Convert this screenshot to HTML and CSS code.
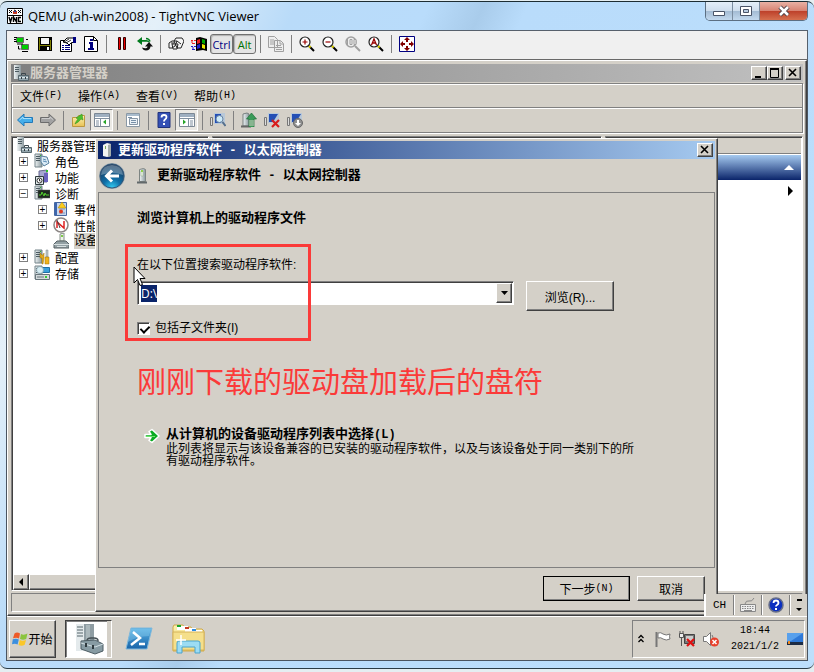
FILE: index.html
```html
<!DOCTYPE html>
<html lang="zh-CN">

<head>
    <meta charset="UTF-8">
    <meta name="viewport" content="width=device-width, initial-scale=1.0">
    <title>QEMU (ah-win2008) - TightVNC Viewer</title>
    <link rel="stylesheet" href="styles.css">
</head>

<body>
    <!-- shared icons -->
    <svg class="sprite" aria-hidden="true">
        <defs>
            <linearGradient id="steel" x1="0" x2="1">
                <stop offset="0" stop-color="#eef3f4" />
                <stop offset="1" stop-color="#8b999e" />
            </linearGradient>
            <linearGradient id="blue" x1="0" y1="0" x2="0" y2="1">
                <stop offset="0" stop-color="#5bb4e6" />
                <stop offset="1" stop-color="#1763a8" />
            </linearGradient>
            <linearGradient id="yellow" x1="0" y1="0" x2="0" y2="1">
                <stop offset="0" stop-color="#fdf3b4" />
                <stop offset="1" stop-color="#e8c254" />
            </linearGradient>
            <radialGradient id="orb" cx="50%" cy="100%" r="95%">
                <stop offset="0" stop-color="#35d0f5" />
                <stop offset="0.4" stop-color="#0f6fa8" />
                <stop offset="1" stop-color="#1b3556" />
            </radialGradient>
            <symbol id="tower" viewBox="0 0 16 16">
                <path d="M1 1h7v13H1z" fill="url(#steel)" stroke="#75848a" />
                <path d="M2 3.500h4M2 5.500h4M2 7.500h4" stroke="#4c5b62" />
                <path d="M6 2h1v1H6z" fill="#2bc02b" />
            </symbol>
            <symbol id="server" viewBox="0 0 16 16">
                <path d="M1 0h7v14H1z" fill="url(#steel)" />
                <path d="M2 2.500h4M2 4.500h4M2 6.500h4" stroke="#4c5b62" />
                <path d="M8.500 10V8.500h4V10" fill="none" stroke="#3a464c" />
                <path d="M5.500 10.500h10v5h-10z" fill="#93a5ad" stroke="#55646b" />
                <path d="M6 12.500h9" stroke="#dce6e9" />
                <path d="M8 12h1v2H8zM12 12h1v2h-1z" fill="#2f3a40" />
            </symbol>
            <symbol id="device" viewBox="0 0 10 16">
                <path d="M2.500 1.500l4-1 2 1v12h-6z" fill="url(#steel)" stroke="#7e8583" />
                <path d="M4 3h2v5H4z" fill="#eef9e8" stroke="#91a58b" stroke-width="0.500" />
                <path d="M4 2h2v2H4z" fill="#8fd14a" />
                <path d="M0 14.500h10" stroke="#62696b" stroke-width="2" />
            </symbol>
            <symbol id="flag4" viewBox="0 0 16 16">
                <path d="M2.500 2.500Q5 .5 8 2.500L7 7.500Q4.500 6 1 7.300z" fill="#ee5a27" />
                <path d="M9 3Q12 4.500 15.500 2.500L14.200 8Q11 9.500 8 8z" fill="#8bc43f" />
                <path d="M.8 8.300Q4 7 6.800 8.500L5.600 13.500Q3 12 0 13.200z" fill="#3c8fde" />
                <path d="M7.800 9Q10.500 10.500 14 8.900L12.700 13.800Q9.500 15.500 6.600 14z" fill="#fbc728" />
            </symbol>
            <symbol id="lens" viewBox="0 0 16 16">
                <path d="M10 10l5 5" stroke="#000" stroke-width="2" />
                <path d="M10 10l1.500 1.500" stroke="#e8dc00" stroke-width="2" />
                <circle cx="6" cy="6" r="5" fill="#fff" stroke="#222" stroke-width="1.200" />
            </symbol>
        </defs>
    </svg>

    <main class="viewer">
        <header class="viewer-title">
            <svg class="icon" viewBox="0 0 16 16">
                <path d="M.5.5h15v15H.5z" fill="#fff" stroke="#000" />
                <path d="M2 2l3 3M5 2L2 5M7 2l2 1M11 2l3 3M14 2l-3 3" stroke="#000" />
                <path d="M6 3h4v3H6z" fill="#c43b24" />
                <path d="M7 3h2v1H7z" fill="#2842b7" />
                <path d="M1 7.500h14" stroke="#000" />
                <path d="M2 9l1.500 5L5 9M6.500 14V9l3 5V9M14 9.500h-2.500v4H14" fill="none" stroke="#000" stroke-width="1.400" />
            </svg>
            <h1>QEMU (ah-win2008) - TightVNC Viewer</h1>
            <div class="caption-buttons">
                <button class="cap" aria-label="Minimize"><svg width="12" height="12" viewBox="0 0 12 12">
                        <path d="M.5 6.500h11v4H.5z" fill="#fff" stroke="#4a5467" />
                    </svg></button>
                <button class="cap" aria-label="Maximize"><svg width="12" height="12" viewBox="0 0 12 12">
                        <path d="M.5 1.500h11v9H.5z" fill="#fff" stroke="#4a5467" />
                        <path d="M3.500 4.500h5v3h-5z" fill="#b9cbe0" stroke="#4a5467" />
                    </svg></button>
                <button class="cap cap-close" aria-label="Close"><svg width="12" height="12" viewBox="0 0 12 12">
                        <path d="M2 2l8 8M10 2l-8 8" stroke="#4a4046" stroke-width="4.500" />
                        <path d="M2 2l8 8M10 2l-8 8" stroke="#fff" stroke-width="2.500" />
                    </svg></button>
            </div>
        </header>

        <nav class="viewer-toolbar">
            <button class="tool" aria-label="New connection"><svg class="icon" viewBox="0 0 16 16">
                    <path d="M2.500 1.500h7v5h-7zM7.500 8.500h7v5h-7z" fill="#0c0" stroke="#666" />
                    <path d="M0 1.500h3M0 3.500h2M0 5.500h3M3 8h6M8 15.500h6M12 3.500h2M4.500 10v3h2" stroke="#000" fill="none" />
                </svg></button>
            <button class="tool" aria-label="Save session"><svg class="icon" viewBox="0 0 16 16">
                    <path d="M1 1h14v14H1z" fill="#000" />
                    <path d="M4 2h8v6H4z" fill="#f4f4f4" />
                    <path d="M2 2h1v12H2zM13 4h1v10h-1zM2 9h12v1H2z" fill="#808000" />
                    <path d="M10 11h2v3h-2z" fill="#fff" />
                </svg></button>
            <button class="tool" aria-label="Options"><svg class="icon" viewBox="0 0 16 16">
                    <path d="M.5 4.500h11v11H.5z" fill="#fff" stroke="#000" />
                    <path d="M2 9.500h2M5 9.500h5M2 11.500h2M5 11.500h5M2 13.500h2M5 13.500h5" stroke="#000080" />
                    <path d="M3 6l4-4h7v4l-3 1-2 2-2-2z" fill="#fff" stroke="#000" />
                    <path d="M13 1h3v6h-3z" fill="#000080" />
                    <path d="M4 6l5-3M6 7l5-3" stroke="#000" stroke-width="0.800" />
                </svg></button>
            <button class="tool" aria-label="Connection info"><svg class="icon" viewBox="0 0 16 16">
                    <path d="M1.500.5h9l4 4v11h-13z" fill="#fff" stroke="#000" />
                    <path d="M10.500.5v4h4" fill="none" stroke="#000" />
                    <path d="M7 3h3v2H7zM6 6h4v6h1v2H5v-2h2V8H6z" fill="#000080" />
                </svg></button>
            <span class="tool-sep"></span>
            <button class="tool" aria-label="Pause"><svg class="icon" viewBox="0 0 16 16">
                    <path d="M4.500 1.500h2v12h-2zM9.500 1.500h2v12h-2z" fill="#e00" stroke="#300" />
                </svg></button>
            <button class="tool" aria-label="Refresh"><svg class="icon" viewBox="0 0 16 16">
                    <path d="M5 1v3h4q3 0 4 3-2-1.500-4-1.200H5V9L0 5z" fill="#007a1c" />
                    <path d="M9 2.500q3 0 4 3" fill="none" stroke="#007a1c" stroke-width="1.500" />
                    <path d="M12 6l4 4.500h-2.500q-.5 4-4.500 4-3 0-4-3 2 1 4 .8 1.500-.3 1.500-1.800H8z" fill="#111" />
                </svg></button>
            <span class="tool-sep"></span>
            <button class="tool" aria-label="Send Ctrl-Alt-Del"><svg class="icon" viewBox="0 0 16 16">
                    <path d="M1 7l3-2h5l-2 5-3 2H1zM6 5l2-3h6l2 3-3 7H9zM4 8h6l-1 5H5z" fill="#f5f5f5" stroke="#222" />
                    <path d="M9 5l4 3M3 7h3" stroke="#222" />
                </svg></button>
            <button class="tool" aria-label="Send Win key"><svg class="icon" viewBox="0 0 16 16">
                    <path d="M5 2l4-1 7 2v12l-4-1-7 1z" fill="#000" />
                    <path d="M6 4l3-1v4L6 8z" fill="#e22" />
                    <path d="M11 3l3 1v4l-3-1z" fill="#0a0" />
                    <path d="M6 9l3-1v4l-3 1z" fill="#22c" />
                    <path d="M11 8l3 1v4l-3-1z" fill="#ee0" />
                    <path d="M0 4.500h2M3 4.500h2M1 7.500h3M0 6h2" stroke="#e22" />
                    <path d="M0 10.500h2M3 10.500h2M1 13.500h3M1 12h2" stroke="#22c" />
                </svg></button>
            <button class="tool key-toggle key-ctrl" aria-pressed="true">Ctrl</button>
            <button class="tool key-toggle key-alt" aria-pressed="true">Alt</button>
            <span class="tool-sep"></span>
            <button class="tool" aria-label="Transfer files"><svg class="icon" viewBox="0 0 16 16">
                    <path d="M.5.5h6l3 3v8h-9zM6.500 4.500h6l3 3v8h-9z" fill="#eee" stroke="#a0a0a0" />
                    <path d="M2 4h4M2 6h4M2 8h4M8 9.500h5M8 11.500h6M8 13.500h6M12 5v3h3" stroke="#a0a0a0" fill="none" />
                </svg></button>
            <span class="tool-sep"></span>
            <button class="tool" aria-label="Zoom in"><svg class="icon" viewBox="0 0 16 16">
                    <use href="#lens" />
                    <path d="M3.500 6h5M6 3.500v5" stroke="#900" stroke-width="1.200" />
                </svg></button>
            <button class="tool" aria-label="Zoom out"><svg class="icon" viewBox="0 0 16 16">
                    <use href="#lens" />
                    <path d="M3.500 6h5" stroke="#900" stroke-width="1.200" />
                </svg></button>
            <button class="tool" aria-label="Zoom 100%"><svg class="icon" viewBox="0 0 16 16">
                    <path d="M10 10l5 5" stroke="#a0a0a0" stroke-width="2" />
                    <circle cx="6" cy="6" r="5" fill="#eee" stroke="#a0a0a0" stroke-width="1.500" />
                    <path d="M2.500 3v6M5 3.500h2v5H5zM9 3.500h2v5H9z" fill="#eee" stroke="#a0a0a0" />
                </svg></button>
            <button class="tool" aria-label="Auto scale"><svg class="icon" viewBox="0 0 16 16">
                    <use href="#lens" />
                    <path d="M3.500 9L6 3l2.500 6M4.500 7h3" fill="none" stroke="#900" stroke-width="1.300" />
                </svg></button>
            <span class="tool-sep"></span>
            <button class="tool" aria-label="Full screen"><svg class="icon" viewBox="0 0 16 16">
                    <path d="M.5.5h15v15H.5z" fill="#fff" stroke="#000080" />
                    <path d="M8 1l3 3H9v2H7V4H5zM8 15l3-3H9v-2H7v2H5zM1 8l3-3v2h2v2H4v2zM15 8l-3-3v2h-2v2h2v2z"
                        fill="#800000" />
                </svg></button>
        </nav>

        <section class="desktop">
            <!-- Server manager -->
            <div class="manager raised">
                <div class="titlebar titlebar-inactive">
                    <svg class="icon" viewBox="0 0 16 16"><use href="#server" /></svg>
                    <h2>服务器管理器</h2>
                    <div class="window-buttons">
                        <button class="win-btn raised" aria-label="最小化"><svg width="10" height="10" viewBox="0 0 10 10">
                                <path d="M1 8h6v2H1z" />
                            </svg></button>
                        <button class="win-btn raised" aria-label="最大化"><svg width="10" height="10" viewBox="0 0 10 10">
                                <path d="M.5 1v8.500h8V1M0 1h9" fill="none" stroke="#000" />
                                <path d="M0 0h9v2H0z" />
                            </svg></button>
                        <button class="win-btn win-close raised" aria-label="关闭"><svg width="10" height="10"
                                viewBox="0 0 10 10">
                                <path d="M1 1l7 7M8 1L1 8" stroke="#000" stroke-width="1.600" />
                            </svg></button>
                    </div>
                </div>

                <div class="bars">
                    <div class="menubar">
                        <button>文件<span class="ascii">(F)</span></button>
                        <button>操作<span class="ascii">(A)</span></button>
                        <button>查看<span class="ascii">(V)</span></button>
                        <button>帮助<span class="ascii">(H)</span></button>
                    </div>
                    <div class="toolbar">
                        <button class="tool" aria-label="后退"><svg class="icon" viewBox="0 0 16 16">
                                <path d="M.5 8L7 2v3.500h8.500v5H7V14z" fill="#46aeea" stroke="#2379b8" />
                                <path d="M2.500 8L6 5v1.500h8" fill="none" stroke="#a9e0fb" />
                            </svg></button>
                        <button class="tool" aria-label="前进"><svg class="icon" viewBox="0 0 16 16">
                                <path d="M15.500 8L9 2v3.500H.5v5H9V14z" fill="#a2a2a2" stroke="#6c6c6c" />
                                <path d="M13 7.500L10 5v1.500H2" fill="none" stroke="#ccc" />
                            </svg></button>
                        <span class="tool-sep"></span>
                        <button class="tool" aria-label="向上"><svg class="icon" viewBox="0 0 16 16">
                                <path d="M1.500 5.500h5l1-2h6v11h-12z" fill="url(#yellow)" stroke="#bb9740" />
                                <path d="M4 12q1-3 3-5L5 6l6-4 1 6-2-1q-2 3-6 5z" fill="#4cc02e" stroke="#2c8a17"
                                    stroke-width="0.500" />
                            </svg></button>
                        <button class="tool tool-on" aria-label="显示树"><svg class="icon" viewBox="0 0 16 16">
                                <path d="M.5 1.500h15v13H.5z" fill="#fff" stroke="#7c8894" />
                                <path d="M1 2h14v3H1z" fill="#9fb0c1" />
                                <path d="M1 6.500h14M6.500 7v7M2 9h3M2 11h3M2 13h3" stroke="#8090a0" />
                                <path d="M12 7.500v5L9 10z" fill="#28a428" />
                            </svg></button>
                        <span class="tool-sep"></span>
                        <button class="tool" aria-label="属性"><svg class="icon" viewBox="0 0 16 16">
                                <path d="M1.500 1.500h13v13h-13z" fill="#fff" stroke="#8a98a5" />
                                <path d="M2 2h12v2H2z" fill="#a9bccd" />
                                <path d="M4.500 6.500h8v6h-8z" fill="#eaf1f7" stroke="#8796a5" />
                                <path d="M3 5.500h4M6 8.500h5M6 10.500h5" stroke="#7890a8" />
                            </svg></button>
                        <span class="tool-sep"></span>
                        <button class="tool" aria-label="帮助"><svg class="icon" viewBox="0 0 16 16">
                                <path d="M2 .5h12v15H2z" fill="#3450b5" stroke="#22337c" />
                                <path d="M5.500 5.500q0-2.500 2.500-2.500t2.500 2q0 1.500-1.500 2.500-1 .7-1 2" fill="none"
                                    stroke="#fff" stroke-width="1.800" />
                                <path d="M7 11h2v2H7z" fill="#fff" />
                            </svg></button>
                        <button class="tool tool-on" aria-label="显示操作窗格"><svg class="icon" viewBox="0 0 16 16">
                                <path d="M.5 1.500h15v13H.5z" fill="#fff" stroke="#7c8894" />
                                <path d="M1 2h14v3H1z" fill="#9fb0c1" />
                                <path d="M1 6.500h14M9.500 7v7M11 9h3M11 11h3M11 13h3" stroke="#8090a0" />
                                <path d="M4 7.500v5L7 10z" fill="#28a428" />
                            </svg></button>
                        <span class="tool-sep"></span>
                        <button class="tool" aria-label="扫描硬件改动"><svg class="icon" viewBox="0 0 16 16">
                                <path d="M.5 5.500h2v8h-2z" fill="#ddd" stroke="#777" />
                                <path d="M4 1h11v11H4z" fill="#b8c8d8" />
                                <path d="M5 2h6v9H5z" fill="#244fb5" />
                                <circle cx="9.500" cy="7" r="3.500" fill="#cdeaf8" stroke="#6782a0" />
                                <path d="M12.500 10l3 4" stroke="#55708c" stroke-width="2" />
                            </svg></button>
                        <span class="tool-sep"></span>
                        <button class="tool" aria-label="更新驱动程序"><svg class="icon" viewBox="0 0 16 16">
                                <path d="M2 2l4-1 2 1v12H2z" fill="url(#steel)" stroke="#788080" />
                                <path d="M0 14.500h10" stroke="#666" stroke-width="2" />
                                <path d="M8 15V7H5.500L10.500 1l5 6H13v8" fill="#3a9b58" stroke="#1e6e38" stroke-width="0.700" />
                                <path d="M8 9h5M8 11h5M8 13h5" stroke="#d4d0c8" />
                            </svg></button>
                        <button class="tool" aria-label="卸载"><svg class="icon" viewBox="0 0 16 16">
                                <path d="M.5 5.500h2v8h-2z" fill="#ddd" stroke="#777" />
                                <path d="M4 1h11v10H4z" fill="#b8c8d8" />
                                <path d="M5 2h9l-5 8H5z" fill="#244fb5" />
                                <path d="M8 8l7 7M15 8l-7 7" stroke="#d81c1c" stroke-width="2.200" />
                            </svg></button>
                        <button class="tool" aria-label="禁用"><svg class="icon" viewBox="0 0 16 16">
                                <path d="M.5 5.500h2v8h-2z" fill="#ddd" stroke="#777" />
                                <path d="M4 1h11v10H4z" fill="#b8c8d8" />
                                <path d="M5 2h9l-5 8H5z" fill="#244fb5" />
                                <circle cx="11" cy="11" r="4.500" fill="#909090" stroke="#686868" />
                                <path d="M10 8h2v3h2l-3 3-3-3h2z" fill="#fff" />
                            </svg></button>
                    </div>
                </div>

                <div class="panes">
                    <div class="tree-pane sunken">
                        <ul class="tree">
                            <li class="root"><svg class="icon" viewBox="0 0 16 16"><use href="#server" /></svg>服务器管理器</li>
                            <li><button class="expander" aria-label="展开">+</button><svg class="icon" viewBox="0 0 16 16">
                                    <use href="#tower" />
                                    <path d="M7 3l6 1 2 6-5 3-3-4z" fill="#dcebf5" stroke="#56809f" />
                                    <path d="M9 6l3 1M9 8l4 1" stroke="#5a8cb5" />
                                </svg>角色</li>
                            <li><button class="expander" aria-label="展开">+</button><svg class="icon" viewBox="0 0 16 16">
                                    <path d="M5 2l8-1v12H5z" fill="#a6a7cf" stroke="#686b91" />
                                    <path d="M10 4h4v9h-4z" fill="#6b62bd" />
                                    <path d="M1.500 7.500h8v8h-8z" fill="#dfe8e9" stroke="#2e3a3e" />
                                    <circle cx="5.500" cy="11.500" r="2.500" fill="#fff" stroke="#333" />
                                    <path d="M5.500 10v2h1" stroke="#333" fill="none" />
                                    <path d="M12 1h2v2h-2z" fill="#2bc02b" />
                                </svg>功能</li>
                            <li><button class="expander" aria-label="折叠">−</button><svg class="icon" viewBox="0 0 16 16">
                                    <use href="#tower" />
                                    <path d="M4 5h12v8H4z" fill="#1d2a20" stroke="#555" stroke-width="0.500" />
                                    <path d="M5 10h2l1-3 2 4 1-3 1 2h3" fill="none" stroke="#52d030" />
                                </svg>诊断</li>
                            <li class="sub"><button class="expander" aria-label="展开">+</button><svg class="icon"
                                    viewBox="0 0 16 16">
                                    <path d="M1.500 1.500h12v13h-12z" fill="#c7d6ec" stroke="#4768a2" />
                                    <path d="M2 2h2v12H2z" fill="#3c66ae" />
                                    <path d="M6 5h6M6 8h6M6 12h6" stroke="#8198bf" />
                                    <path d="M9 1l4 6H5z" fill="#fbcc1d" stroke="#b28400" stroke-width="0.500" />
                                    <circle cx="8" cy="10.500" r="2" fill="#e03a20" />
                                </svg>事件查看器</li>
                            <li class="sub"><button class="expander" aria-label="展开">+</button><svg class="icon"
                                    viewBox="0 0 16 16">
                                    <circle cx="8" cy="8" r="7" fill="#fff" stroke="#8b8584" stroke-width="1.500" />
                                    <path d="M4 11V5l7 6V4" fill="none" stroke="#d22" stroke-width="1.500" />
                                    <path d="M4 3l3 8" stroke="#444" />
                                </svg>性能</li>
                            <li class="sub"><svg class="icon leaf" viewBox="0 0 16 16">
                                    <path d="M7 1l4-1v8H7z" fill="#eef4ea" stroke="#869088" />
                                    <path d="M8 2h2v2H8z" fill="#7ec94b" />
                                    <path d="M1 11l3-3h9l3 3v4H1z" fill="#93a0a4" stroke="#566065" />
                                    <path d="M1 11.500h15M4 13.500h9" stroke="#d8dfe1" />
                                </svg><span class="selected">设备管理器</span></li>
                            <li><button class="expander" aria-label="展开">+</button><svg class="icon" viewBox="0 0 16 16">
                                    <use href="#tower" />
                                    <path d="M8 15V9H6V4l2 2h1l1-2v5l-1 6z" fill="#e3aa1f" stroke="#99720b"
                                        stroke-width="0.500" />
                                    <path d="M12 8V1h2v7z" fill="#bfc9cd" stroke="#7b868a" stroke-width="0.500" />
                                    <path d="M11 8h4v7h-4z" fill="#f0b31c" stroke="#99720b" stroke-width="0.500" />
                                </svg>配置</li>
                            <li><button class="expander" aria-label="展开">+</button><svg class="icon" viewBox="0 0 16 16">
                                    <use href="#tower" />
                                    <path d="M7.500 2.500h8v5h-8z" fill="#3aa0dc" stroke="#1f6fa5" />
                                    <path d="M1.500 9.500h14v5h-14z" fill="#d4dadc" stroke="#68757b" />
                                    <path d="M3 12h7" stroke="#68757b" />
                                    <path d="M11 11h2v2h-2z" fill="#3c3" />
                                    <circle cx="6" cy="5" r="3.500" fill="#d8eef4" stroke="#7d98a4" stroke-width="0.700" />
                                </svg>存储</li>
                        </ul>
                        <div class="scrollbar">
                            <button class="scroll-btn raised" aria-label="向左滚动"><svg width="6" height="8"
                                    viewBox="0 0 6 8">
                                    <path d="M5 0v8L1 4z" />
                                </svg></button>
                            <div class="scroll-thumb raised"></div>
                        </div>
                    </div>
                    <div class="center-pane sunken"></div>
                    <aside class="action-pane sunken">
                        <div class="action-head"></div>
                        <button class="action-group" aria-label="折叠"><svg width="10" height="6" viewBox="0 0 10 6">
                                <path d="M0 5l5-5 5 5z" fill="#fff" />
                            </svg></button>
                        <button class="action-more" aria-label="更多操作"><svg width="5" height="10" viewBox="0 0 5 10">
                                <path d="M0 0v10l5-5z" />
                            </svg></button>
                    </aside>
                </div>
                <div class="statusbar"></div>
            </div>

            <!-- Taskbar -->
            <footer class="taskbar">
                <button class="start raised"><svg class="icon" viewBox="0 0 16 16"><use href="#flag4" /></svg>开始</button>
                <button class="task task-active" aria-label="服务器管理器"><svg width="32" height="32" viewBox="0 0 32 32">
                        <path d="M3 1h8v27H3z" fill="#e4eaec" />
                        <path d="M11 1h10v20H11z" fill="#8f9da3" />
                        <path d="M4 4h6M4 7h6M4 10h6M4 13h6" stroke="#55646b" />
                        <path d="M13 2h4v18h-4z" fill="#abb8bc" />
                        <path d="M14 18q0-3 4-3h3q4 0 4 3" fill="none" stroke="#434e53" stroke-width="1.500" />
                        <path d="M8 18l14-1 8 4v7l-8 3-14-5z" fill="#879ba3" stroke="#4d5d64" />
                        <path d="M8 20l14 4 8-3" fill="none" stroke="#d3dfe3" />
                        <path d="M12 20h2v4h-2zM19 22h2v4h-2z" fill="#2e3a3f" />
                    </svg></button>
                <button class="task" aria-label="PowerShell"><svg width="32" height="32" viewBox="0 0 32 32">
                        <path d="M8 5h21l-5 21H3z" fill="url(#blue)" stroke="#7eb8dc" stroke-linejoin="round" />
                        <path d="M8 6h20l-2 7Q14 13 5 19z" fill="#9cd8f3" opacity="0.350" />
                        <path d="M10 9l7 6-9 7M16 21h6" fill="none" stroke="#fff" stroke-width="2.500" />
                    </svg></button>
                <button class="task" aria-label="资源管理器"><svg width="34" height="32" viewBox="0 0 34 32">
                        <path d="M1 4l1-2h9l1 2h7l1 2h10l2 2v20H1z" fill="url(#yellow)" stroke="#cfa94b" />
                        <path d="M5 3h11v4H5zM13 5h11v4H13zM20 7h10v3H20z" fill="#fff" />
                        <path d="M5 2h4v2H5z" fill="#19a62b" />
                        <path d="M13 4h4v2h-4z" fill="#c53b23" />
                        <path d="M20 6h4v2h-4z" fill="#2f8de1" />
                        <path d="M1 9h31v18H1z" fill="#f5df8b" stroke="#d6b45b" />
                        <path d="M5 30V20q0-2 2-2h19q2 0 2 2v10h-5v-6H10v6z" fill="#9cdcf4" stroke="#4aa4cd" />
                        <path d="M9 12v10M4 17h10" stroke="#fff" stroke-width="1.500" />
                    </svg></button>
                <div class="tray">
                    <button class="tray-btn tray-more" aria-label="显示隐藏的图标"><svg width="6" height="9" viewBox="0 0 6 9">
                            <path d="M.5 4L3 1.500 5.500 4M.5 8L3 5.500 5.500 8" fill="none" stroke="#000" stroke-width="1.300" />
                        </svg></button>
                    <button class="tray-btn" aria-label="操作中心"><svg class="icon" viewBox="0 0 16 16">
                            <path d="M1.500 1v15" stroke="#777" stroke-width="2" />
                            <path d="M3 2q3-1 5 1 3 2 7 0-1 3 0 5-4 2-7 0-2-2-5-1z" fill="#fff" stroke="#777" />
                        </svg></button>
                    <button class="tray-btn" aria-label="网络"><svg class="icon" viewBox="0 0 16 16">
                            <path d="M1 0v3M4 0v3" stroke="#555" />
                            <path d="M.5 2.500h4v4h-4zM2.500 7v8" fill="#eee" stroke="#555" />
                            <path d="M5.500 3.500h10v9h-10z" fill="#777" stroke="#444" />
                            <path d="M7 5h7v5H7z" fill="#ccc" />
                            <path d="M8 8l7 7M15 8l-7 7" stroke="#e01010" stroke-width="2.200" />
                        </svg></button>
                    <button class="tray-btn" aria-label="音量"><svg class="icon" viewBox="0 0 16 16">
                            <path d="M.5 5.500h3l4-4v13l-4-4h-3z" fill="#fff" stroke="#777" />
                            <path d="M9 4q2 2 0 5" stroke="#777" fill="none" />
                            <circle cx="11.500" cy="11" r="4.500" fill="#e8402c" />
                            <path d="M9.500 9l4 4M13.500 9l-4 4" stroke="#fff" stroke-width="1.500" />
                        </svg></button>
                    <time class="clock" datetime="2021-01-02T18:44">18:44<br>2021/1/2</time>
                    <button class="tray-btn" aria-label="显示桌面"><svg width="16" height="14" viewBox="0 0 16 14">
                            <path d="M0 1h16v11H0z" fill="#2f79d8" />
                            <path d="M0 1h16L4 9H0z" fill="#58a0ec" />
                            <path d="M0 10h16v3H0z" fill="#1d2c45" />
                            <path d="M1 9h2v3H1z" fill="#f08c22" />
                        </svg></button>
                </div>
            </footer>

            <!-- Driver update wizard -->
            <form class="dialog raised" onsubmit="return false">
                <div class="titlebar titlebar-active">
                    <svg width="10" height="14" viewBox="0 0 10 14">
                        <path d="M1 2l4-2 4 1v12l-4 1-4-1z" fill="#f2f4f2" />
                        <path d="M6 2l3-1v12l-3 1z" fill="#a4acab" />
                        <path d="M3 3h1v3H3z" fill="#7fae58" />
                    </svg>
                    <h2>更新驱动程序软件<span class="ascii"> - </span>以太网控制器</h2>
                    <div class="window-buttons">
                        <button type="button" class="win-btn raised" aria-label="关闭"><svg width="10" height="10"
                                viewBox="0 0 10 10">
                                <path d="M1 1l7 7M8 1L1 8" stroke="#000" stroke-width="1.600" />
                            </svg></button>
                    </div>
                </div>
                <div class="wizard-head">
                    <button type="button" class="back" aria-label="后退"><svg width="28" height="28" viewBox="0 0 28 28">
                            <circle cx="14" cy="14" r="13" fill="#9aa7b0" />
                            <circle cx="14" cy="14" r="12" fill="url(#orb)" stroke="#33587a" />
                            <path d="M3 13Q4 3 14 3t11 10q-11-4-22 0z" fill="#b9d3e2" opacity="0.400" />
                            <path d="M21 14H9M14 8.500L8.500 14l5.500 5.500" fill="none" stroke="#fff" stroke-width="3" />
                        </svg></button>
                    <svg width="10" height="16" viewBox="0 0 10 16"><use href="#device" /></svg>
                    <h2>更新驱动程序软件<span class="ascii"> - </span>以太网控制器</h2>
                </div>
                <div class="wizard-page">
                    <h3>浏览计算机上的驱动程序文件</h3>
                    <label class="path-label" for="path">在以下位置搜索驱动程序软件:</label>
                    <div class="path-row">
                        <div class="combo sunken">
                            <input id="path" type="text" value="D:\" autofocus>
                            <button type="button" class="drop raised" aria-label="打开列表"><svg width="7" height="4"
                                    viewBox="0 0 7 4">
                                    <path d="M0 0h7L3.500 4z" />
                                </svg></button>
                        </div>
                        <button type="button" class="browse raised">浏览(R)...</button>
                    </div>
                    <label class="check"><input type="checkbox" checked>包括子文件夹(I)</label>
                    <p class="note">刚刚下载的驱动盘加载后的盘符</p>
                    <a class="choose" href="#">
                        <svg class="icon" viewBox="0 0 16 16">
                            <path d="M1 6.500h6L5 3.500 8 1.500 15 8l-7 6.500-3-2 2-3H1z" fill="#0cab23" stroke="#fff"
                                stroke-width="1.500" stroke-linejoin="round" />
                            <path d="M2 8.500h9" stroke="#6fe36b" />
                        </svg>
                        <span>
                            <strong>从计算机的设备驱动程序列表中选择<span class="ascii">(L)</span></strong>
                            <span class="choose-text">此列表将显示与该设备兼容的已安装的驱动程序软件，以及与该设备处于同一类别下的所有驱动程序软件。</span>
                        </span>
                    </a>
                </div>
                <div class="wizard-buttons">
                    <button class="next raised">下一步<span class="ascii">(N)</span></button>
                    <button type="button" class="cancel raised">取消</button>
                </div>
                <div class="mark"></div>
                <svg class="pointer" width="13" height="21" viewBox="0 0 13 21">
                    <path d="M1 1v16l3.500-3.500 2.500 6 2.500-1-2.500-6H12z" fill="#fff" stroke="#000" />
                </svg>
            </form>

            <div class="langbar">
                <button class="ascii">CH</button>
                <button aria-label="键盘"><svg class="icon" viewBox="0 0 16 16">
                        <path d="M.5 7.500h15v7H.5z" fill="#eee" stroke="#888" />
                        <path d="M2 9.500h12M2 11.500h12" stroke="#888" stroke-dasharray="1.500 1" />
                        <path d="M4 13.500h8M5 7q1-4 4-3t5-3" fill="none" stroke="#888" />
                    </svg></button>
                <button aria-label="帮助"><svg class="icon" viewBox="0 0 16 16">
                        <circle cx="8" cy="8" r="7" fill="#0b2fc0" stroke="#666e88" stroke-width="1.500" />
                        <path d="M5.500 6q0-2.500 2.500-2.500T10.500 6q0 1-1.500 2-1 .6-1 1.500" fill="none" stroke="#fff"
                            stroke-width="1.800" />
                        <path d="M7 11h2v2H7z" fill="#fff" />
                    </svg></button>
                <button class="lang-menu" aria-label="选项"><svg width="6" height="12" viewBox="0 0 6 12">
                        <path d="M1 0h5v2H1zM0 9h6l-3 3z" />
                    </svg></button>
            </div>
        </section>
    </main>

    <script>
        document.getElementById('path').select();
    </script>
</body>

</html>
```
FILE: styles.css
```css
* {
    box-sizing: border-box;
}

body {
    margin: 0;
    min-height: 100vh;
    display: flex;
    padding: 1px 0 3px;
    background-color: #e4eef2;
    color: #000;
    font-family: "Liberation Sans", "Noto Sans CJK SC", sans-serif;
    font-size: 12px;
}

h1, h2, h3, p, ul {
    margin: 0;
    padding: 0;
    font-size: 12px;
}

button {
    padding: 0;
    border: none;
    background: none;
    color: inherit;
    font: inherit;
    display: flex;
    align-items: center;
    justify-content: center;
}

svg {
    display: block;
    flex-shrink: 0;
}

.sprite {
    position: absolute;
    width: 0;
    height: 0;
}

.icon {
    width: 16px;
    height: 16px;
}

.ascii {
    font-family: "Liberation Mono", monospace;
    font-size: 10px;
    white-space: pre;
}

/* classic 3D edges */
.raised {
    background-color: #d4d0c8;
    border: 1px solid;
    border-color: #fff #404040 #404040 #fff;
    box-shadow: inset -1px -1px #808080;
}

.sunken {
    border: 1px solid;
    border-color: #808080 #fff #fff #808080;
    box-shadow: inset 1px 1px #404040;
}

/* viewer frame */
.viewer {
    flex: 1;
    display: flex;
    flex-direction: column;
    padding: 0 6px 7px;
    border-top: 1px solid #1d2d33;
    border-bottom: 1px solid #2b3c46;
    border-radius: 7px;
    background: linear-gradient(115deg, #cfe3f3 0, #e4f0f9 150px, #b9dbf9 270px, #b9dcfb 390px, #a9cceb 440px, #b9dcfb 480px, #bcdffc 100%);
}

.viewer-title {
    height: 28px;
    display: flex;
    align-items: center;
    gap: 5px;
    padding-left: 1px;
}

.viewer-title h1 {
    flex: 1;
    font-family: "Open Sans", sans-serif;
    font-size: 13px;
    font-weight: normal;
    line-height: 18px;
}

.caption-buttons {
    align-self: flex-start;
    display: flex;
    height: 19px;
    border: 1px solid #5c6f82;
    border-top: none;
    border-radius: 0 0 5px 5px;
    overflow: hidden;
}

.cap {
    width: 27px;
    border-right: 1px solid #7b8da0;
    background: linear-gradient(#e3eef8 0, #cfdeed 48%, #a3bbd3 50%, #c3d9ee 100%);
}

.cap-close {
    width: 47px;
    border-right: none;
    background: linear-gradient(#e9b1a4 0, #d88473 48%, #bd3f29 50%, #d5704f 100%);
}

.viewer-toolbar {
    display: flex;
    height: 30px;
    padding: 2px 3px 4px;
    border: 1px solid #56606c;
    border-bottom-color: #696969;
    background-color: #f0f0f0;
}

.tool {
    width: 23px;
    height: 22px;
}

.tool-sep {
    width: 8px;
    display: flex;
    justify-content: center;
    padding: 2px 0;
}

.tool-sep::before {
    content: "";
    width: 1px;
    background-color: #808080;
}

.key-toggle {
    align-self: center;
    height: 20px;
    border: 1px solid #707070;
    border-radius: 3px;
    background-color: #e4e4e4;
    box-shadow: inset 1px 1px 1px #b0b0b0;
    font-family: "Open Sans", sans-serif;
    font-size: 11px;
}

.key-ctrl {
    color: #000080;
}

.key-alt {
    color: #007000;
}

/* remote desktop */
.desktop {
    position: relative;
    flex: 1;
    display: flex;
    flex-direction: column;
    border: 1px solid #4a5460;
    border-top: none;
    background-color: #d4d0c8;
}

.manager {
    flex: 1;
    display: flex;
    flex-direction: column;
    padding: 3px;
}

.titlebar {
    height: 18px;
    display: flex;
    align-items: center;
    gap: 1px;
    padding: 0 2px;
}

.titlebar h2 {
    flex: 1;
}

.titlebar h2,
.wizard-head h2,
.wizard-page h3,
.choose strong {
    font-size: 13px;
    font-weight: bold;
    line-height: 16px;
}

h2 .ascii,
strong .ascii {
    font-size: 12px;
}

.titlebar-inactive {
    background: linear-gradient(90deg, #808080, #c0c0c0);
    color: #d4d0c8;
}

.titlebar-active {
    gap: 6px;
    padding-left: 4px;
    background: linear-gradient(90deg, #0a246a, #a6caf0);
    color: #fff;
}

.window-buttons {
    display: flex;
}

.win-btn {
    width: 16px;
    height: 14px;
}

.win-close {
    margin-left: 2px;
}

.bars {
    margin-top: 1px;
    border: 1px solid #808080;
    box-shadow: 1px 1px #fff, inset 1px 1px #fff;
}

.menubar {
    display: flex;
    height: 24px;
    border-bottom: 1px solid #808080;
}

.menubar button {
    padding: 0 8px;
}

.toolbar {
    display: flex;
    height: 24px;
    padding-left: 1px;
    border-top: 1px solid #fff;
}

.tool-on {
    border: 1px solid;
    border-color: #808080 #fff #fff #808080;
    background-color: #ebe9e4;
}

.panes {
    flex: 1;
    display: flex;
    gap: 3px;
    margin-top: 3px;
}

.tree-pane {
    width: 25%;
    display: flex;
    flex-direction: column;
    background-color: #fff;
}

.tree {
    flex: 1;
    list-style: none;
}

.tree li {
    display: flex;
    align-items: center;
    gap: 5px;
    height: 16px;
    padding-left: 7px;
    white-space: nowrap;
}

.tree .root {
    padding-left: 4px;
}

.tree .sub {
    padding-left: 26px;
}

.tree .leaf {
    margin-left: 15px;
}

.expander {
    width: 9px;
    height: 9px;
    margin-right: 1px;
    border: 1px solid #808080;
    font-size: 10px;
    line-height: 7px;
}

.selected {
    background-color: #d4d0c8;
    line-height: 16px;
}

.scrollbar {
    display: flex;
    height: 16px;
    margin-left: 1px;
    background-color: #eae8e4;
}

.scroll-btn {
    width: 16px;
}

.scroll-thumb {
    width: 120px;
}

.center-pane {
    flex: 1;
    background-color: #fff;
}

.action-pane {
    width: 25%;
    display: flex;
    flex-direction: column;
    padding: 1px;
    background-color: #fff;
}

.action-head {
    height: 16px;
    border-bottom: 1px solid #808080;
    background-color: #d4d0c8;
}

.action-group {
    height: 26px;
    justify-content: flex-end;
    padding-right: 7px;
    border-top: 1px solid #fff;
    background: linear-gradient(#a6caf0, #0a246a);
}

.action-more {
    height: 22px;
    justify-content: flex-end;
    padding-right: 8px;
}

.statusbar {
    height: 19px;
    margin-top: 2px;
    border: 1px solid;
    border-color: #808080 #fff #fff #808080;
}

/* wizard window */
.dialog {
    position: absolute;
    top: 78px;
    right: 89px;
    bottom: 48px;
    left: 88px;
    display: flex;
    flex-direction: column;
    padding: 2px;
}

.wizard-head {
    display: flex;
    align-items: center;
    height: 33px;
}

.back {
    margin-right: 11px;
}

.wizard-head h2 {
    margin-left: 10px;
}

.wizard-page {
    flex: 1;
    padding: 17px 80px 0 38px;
    border: 1px solid #808080;
}

.path-label {
    display: block;
    margin: 31px 0 8px;
    line-height: 16px;
}

.path-row {
    display: flex;
    align-items: flex-start;
    gap: 12px;
    margin-right: 20px;
}

.combo {
    flex: 1;
    display: flex;
    height: 24px;
    padding: 1px;
    background-color: #fff;
}

.combo input {
    flex: 1;
    min-width: 0;
    padding: 0 2px;
    border: none;
    outline: none;
    background: none;
    font-family: "Open Sans", sans-serif;
    font-size: 12px;
}

.combo input::selection {
    background-color: #0a246a;
    color: #fff;
}

.drop {
    width: 16px;
}

.browse {
    width: 88px;
    height: 30px;
}

.check {
    display: flex;
    align-items: center;
    gap: 5px;
    margin-top: 9px;
    line-height: 16px;
}

.check input {
    appearance: none;
    width: 13px;
    height: 13px;
    margin: 0;
    border: 1px solid;
    border-color: #808080 #fff #fff #808080;
    background-color: #fff;
    box-shadow: inset 1px 1px #404040;
}

.check input:checked::before {
    content: "";
    display: block;
    width: 4px;
    height: 7px;
    margin: 1px 0 0 4px;
    border: solid #000;
    border-width: 0 2px 2px 0;
    transform: rotate(45deg);
}

.note {
    margin: 29px 0 25px;
    color: #fb3a39;
    font-size: 29px;
    line-height: 36px;
    white-space: nowrap;
}

.choose {
    display: flex;
    align-items: flex-start;
    gap: 6px;
    padding-left: 7px;
    color: inherit;
    text-decoration: none;
}

.choose .icon {
    margin-top: 2px;
}

.choose strong,
.choose-text {
    display: block;
}

.choose-text {
    line-height: 12px;
}

.wizard-buttons {
    display: flex;
    justify-content: flex-end;
    gap: 7px;
    padding: 8px 10px;
}

.wizard-buttons button {
    height: 25px;
}

.next {
    width: 87px;
    outline: 1px solid #000;
    outline-offset: -1px;
}

.cancel {
    width: 68px;
}

/* red frame and mouse pointer over the form */
.mark {
    position: absolute;
    top: 105px;
    left: 29px;
    width: 186px;
    height: 97px;
    border: 3px solid #fb3a39;
}

.pointer {
    position: absolute;
    top: 127px;
    left: 37px;
}

.langbar {
    position: absolute;
    right: 0;
    bottom: 44px;
    display: flex;
    height: 22px;
    border-left: 2px solid #fff;
    background-color: #d4d0c8;
}

.langbar button {
    width: 28px;
    margin: 1px 0;
    border-right: 1px solid #808080;
    box-shadow: 1px 0 #fff;
}

.langbar .ascii {
    font-size: 11px;
}

.langbar .lang-menu {
    width: 17px;
    border-right: none;
    box-shadow: none;
}

/* taskbar */
.taskbar {
    display: flex;
    align-items: center;
    height: 44px;
    padding: 0 2px;
    border-top: 1px solid #fff;
}

.start {
    width: 47px;
    height: 38px;
    margin-right: 9px;
}

.task {
    width: 47px;
    height: 38px;
    margin-right: 3px;
}

.task-active {
    border: 1px solid;
    border-color: #404040 #fff #fff #404040;
    box-shadow: inset -4px 0 #d4d0c8, inset 1px 1px #808080;
    background-color: #fff;
}

.tray {
    display: flex;
    align-items: center;
    height: 38px;
    margin-left: auto;
    padding: 0 1px 0 5px;
    border: 1px solid;
    border-color: #808080 #fff #fff #808080;
}

.tray-btn {
    margin-right: 8px;
}

.tray-more {
    margin-right: 11px;
}

.tray-btn:last-child {
    margin-right: 0;
}

.clock {
    width: 56px;
    margin-right: 4px;
    font-family: "Liberation Mono", monospace;
    font-size: 10px;
    line-height: 16px;
    text-align: center;
}
```
